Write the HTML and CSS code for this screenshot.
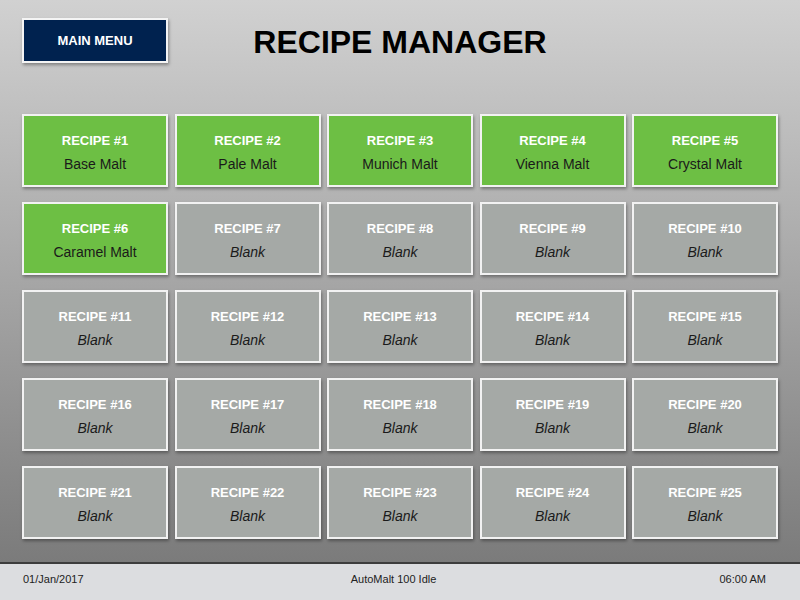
FILE: index.html
```html
<!DOCTYPE html>
<html lang="en">
<head>
    <meta charset="UTF-8">
    <title>Recipe Manager</title>
    <link rel="stylesheet" href="styles.css">
</head>
<body>
    <div class="screen">
        <!--top bar-->
        <div class="header">
            <div class="menu-btn">MAIN MENU</div>
            <h1 class="title">RECIPE MANAGER</h1>
            <div></div>
        </div>

        <!--recipe tiles-->
        <ul class="recipes">
            <li class="used"><b>RECIPE #1</b><span>Base Malt</span></li>
            <li class="used"><b>RECIPE #2</b><span>Pale Malt</span></li>
            <li class="used"><b>RECIPE #3</b><span>Munich Malt</span></li>
            <li class="used"><b>RECIPE #4</b><span>Vienna Malt</span></li>
            <li class="used"><b>RECIPE #5</b><span>Crystal Malt</span></li>
            <li class="used"><b>RECIPE #6</b><span>Caramel Malt</span></li>
            <li><b>RECIPE #7</b><i>Blank</i></li>
            <li><b>RECIPE #8</b><i>Blank</i></li>
            <li><b>RECIPE #9</b><i>Blank</i></li>
            <li><b>RECIPE #10</b><i>Blank</i></li>
            <li><b>RECIPE #11</b><i>Blank</i></li>
            <li><b>RECIPE #12</b><i>Blank</i></li>
            <li><b>RECIPE #13</b><i>Blank</i></li>
            <li><b>RECIPE #14</b><i>Blank</i></li>
            <li><b>RECIPE #15</b><i>Blank</i></li>
            <li><b>RECIPE #16</b><i>Blank</i></li>
            <li><b>RECIPE #17</b><i>Blank</i></li>
            <li><b>RECIPE #18</b><i>Blank</i></li>
            <li><b>RECIPE #19</b><i>Blank</i></li>
            <li><b>RECIPE #20</b><i>Blank</i></li>
            <li><b>RECIPE #21</b><i>Blank</i></li>
            <li><b>RECIPE #22</b><i>Blank</i></li>
            <li><b>RECIPE #23</b><i>Blank</i></li>
            <li><b>RECIPE #24</b><i>Blank</i></li>
            <li><b>RECIPE #25</b><i>Blank</i></li>
        </ul>

        <!--status bar-->
        <div class="footer">
            <span>01/Jan/2017</span>
            <span class="status">AutoMalt 100 Idle</span>
            <span>06:00 AM</span>
        </div>
    </div>
</body>
</html>
```

FILE: styles.css
```css
*{margin:0;padding:0;box-sizing:border-box;}
li{list-style:none}

body{
    font-family:"Liberation Sans",Arial,sans-serif;
}

.screen{
    width:800px;
    height:600px;
    display:flex;
    flex-direction:column;
    background:linear-gradient(#d1d1d1,#7b7b7b 562px);
}

.header{
    display:grid;
    grid-template-columns:1fr auto 1fr;
    align-items:start;
    padding:18px 22px 0;
}
.menu-btn{
    width:146px;
    height:45px;
    background-color:#00224f;
    border:2px solid #f4f4f4;
    box-shadow:1px 2px 3px rgba(0,0,0,.35);

    color:#fff;
    font-size:13px;
    font-weight:bold;
    line-height:41px;
    text-align:center;
}
.title{
    font-size:32px;
    font-weight:bold;
    color:#000;
    line-height:45px;
    padding-top:2px;
}

.recipes{
    display:grid;
    grid-template-columns:repeat(5,1fr);
    grid-auto-rows:73px;
    column-gap:6.5px;
    row-gap:15px;
    padding:0 22px;
    margin-top:49px;
}
.recipes li{
    display:flex;
    flex-direction:column;
    align-items:center;
    justify-content:center;
    gap:7px;
    padding-top:3px;

    background-color:#a5a9a6;
    border:2px solid #f2f2f2;
    box-shadow:1px 2px 3px rgba(0,0,0,.35);

    font-size:13px;
    color:#1a1a1a;
}
.recipes li.used{
    background-color:#6dbf44;
}
.recipes li b{
    color:#fff;
    line-height:17px;
}
.recipes li span,
.recipes li i{
    font-size:14px;
    line-height:17px;
}

.footer{
    margin-top:auto;
    height:38px;
    display:flex;
    justify-content:space-between;
    align-items:center;
    padding:0 34px 6px 23px;
    background-color:#dcdde0;
    border-top:2px solid #3d3d3d;

    font-size:11px;
    color:#222;
}
.footer .status{
    margin-right:16px;
}
```
